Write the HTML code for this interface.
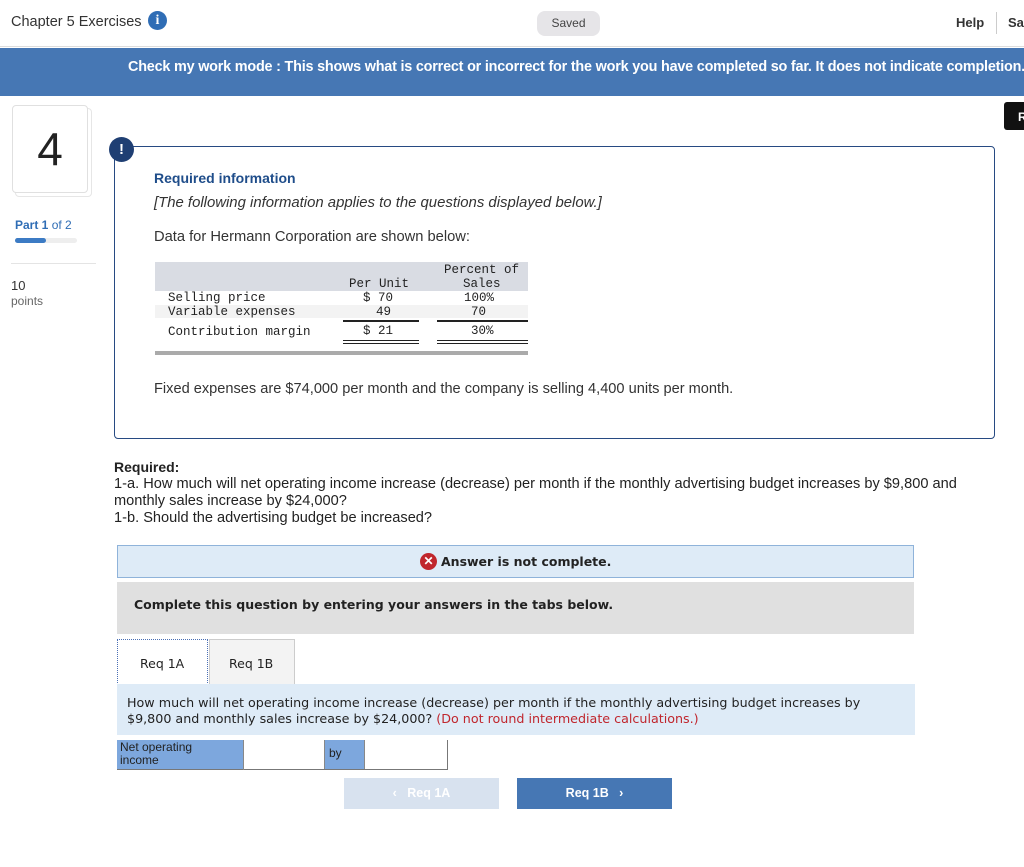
<!DOCTYPE html>
<html><head><meta charset="utf-8"><style>
*{margin:0;padding:0;box-sizing:border-box}
body{width:1024px;height:867px;position:relative;background:#fff;font-family:"Liberation Sans",Arial,sans-serif;color:#222;overflow:hidden}
.a{position:absolute;white-space:nowrap}
.mono{font-family:"Liberation Mono","Courier New",monospace;font-size:12.5px;color:#222}
.v{font-family:"DejaVu Sans","Liberation Sans",sans-serif}
</style></head><body>
<div class="a" style="left:0;top:0;width:1024px;height:47px;border-bottom:1px solid #ddd"></div>
<div class="a" style="left:11px;top:14px;font-size:14.5px;color:#333">Chapter 5 Exercises</div>
<div class="a" style="left:148px;top:11px;width:19px;height:19px;border-radius:50%;background:#2f6db5;color:#fff;font:bold 14px 'Liberation Serif',serif;text-align:center;line-height:19px">i</div>
<div class="a" style="left:537px;top:11px;width:63px;height:25px;border-radius:8px;background:#e6e5e8;font-size:12px;color:#444;text-align:center;line-height:25px">Saved</div>
<div class="a" style="left:956px;top:15px;font-size:13px;font-weight:bold;color:#333">Help</div>
<div class="a" style="left:996px;top:12px;width:1px;height:22px;background:#ccc"></div>
<div class="a" style="left:1008px;top:15px;font-size:13px;font-weight:bold;color:#333">Sa</div>
<div class="a" style="left:0;top:48px;width:1024px;height:48px;background:#4677b4"></div>
<div class="a" style="left:128px;top:59px;font-size:14.4px;font-weight:bold;color:#fff;letter-spacing:-0.2px">Check my work mode : This shows what is correct or incorrect for the work you have completed so far. It does not indicate completion.</div>
<div class="a" style="left:1004px;top:102px;width:30px;height:28px;background:#111;border-radius:3px;color:#fff;font-weight:bold;font-size:12px;padding:8px 0 0 14px">R</div>
<div class="a" style="left:15px;top:108px;width:77px;height:89px;border:1px solid #e6e6e6;border-radius:4px"></div>
<div class="a" style="left:12px;top:105px;width:76px;height:88px;border:1px solid #e0e0e0;border-radius:4px;background:#fff;text-align:center;font-size:46px;line-height:86px;color:#222">4</div>
<div class="a" style="left:15px;top:218px;font-size:12px;color:#2f6db5"><b>Part 1</b> of 2</div>
<div class="a" style="left:15px;top:238px;width:62px;height:5px;border-radius:3px;background:#eee"></div>
<div class="a" style="left:15px;top:238px;width:31px;height:5px;border-radius:3px;background:#3c7bc4"></div>
<div class="a" style="left:11px;top:263px;width:85px;height:1px;background:#e4e4e4"></div>
<div class="a" style="left:11px;top:278px;font-size:13px;color:#333">10</div>
<div class="a" style="left:11px;top:294px;font-size:12px;color:#666">points</div>
<div class="a" style="left:114px;top:146px;width:881px;height:293px;border:1.5px solid #274a82;border-radius:4px"></div>
<div class="a" style="left:109px;top:137px;width:25px;height:25px;border-radius:50%;background:#1f3f73;color:#fff;font-weight:bold;font-size:15px;text-align:center;line-height:25px">!</div>
<div class="a" style="left:154px;top:170px;font-size:14px;font-weight:bold;color:#1f4d8a">Required information</div>
<div class="a" style="left:154px;top:195px;font-size:14.9px;font-style:italic;color:#333">[The following information applies to the questions displayed below.]</div>
<div class="a" style="left:154px;top:229px;font-size:14.7px;color:#333">Data for Hermann Corporation are shown below:</div>
<div class="a" style="left:155px;top:262px;width:373px;height:29px;background:#d9dce3"></div>
<div class="a" style="left:155px;top:305px;width:373px;height:13px;background:#f3f3f3"></div>
<div class="a mono" style="left:444px;top:263px">Percent of</div>
<div class="a mono" style="left:463px;top:277px">Sales</div>
<div class="a mono" style="left:349px;top:277px">Per Unit</div>
<div class="a mono" style="left:168px;top:291px">Selling price</div>
<div class="a mono" style="left:363px;top:291px">$ 70</div>
<div class="a mono" style="left:464px;top:291px">100%</div>
<div class="a mono" style="left:168px;top:305px">Variable expenses</div>
<div class="a mono" style="left:376px;top:305px">49</div>
<div class="a mono" style="left:471px;top:305px">70</div>
<div class="a" style="left:343px;top:320px;width:76px;height:1.5px;background:#222"></div>
<div class="a" style="left:437px;top:320px;width:91px;height:1.5px;background:#222"></div>
<div class="a mono" style="left:168px;top:325px">Contribution margin</div>
<div class="a mono" style="left:363px;top:324px">$ 21</div>
<div class="a mono" style="left:471px;top:324px">30%</div>
<div class="a" style="left:343px;top:340px;width:76px;height:4px;border-top:1.5px solid #222;border-bottom:1.5px solid #222"></div>
<div class="a" style="left:437px;top:340px;width:91px;height:4px;border-top:1.5px solid #222;border-bottom:1.5px solid #222"></div>
<div class="a" style="left:155px;top:351px;width:373px;height:4px;background:#aaa"></div>
<div class="a" style="left:154px;top:381px;font-size:14.6px;color:#333">Fixed expenses are $74,000 per month and the company is selling 4,400 units per month.</div>
<div class="a" style="left:114px;top:459px;font-size:14px;font-weight:bold;color:#222">Required:</div>
<div class="a" style="left:114px;top:476px;font-size:14.6px;color:#222;line-height:17px">1-a. How much will net operating income increase (decrease) per month if the monthly advertising budget increases by $9,800 and<br>monthly sales increase by $24,000?<br>1-b. Should the advertising budget be increased?</div>
<div class="a" style="left:117px;top:545px;width:797px;height:33px;background:#deebf7;border:1px solid #8fb3da"></div>
<div class="a" style="left:420px;top:553px;width:17px;height:17px;border-radius:50%;background:#c0262d;color:#fff;font-size:12px;font-weight:bold;text-align:center;line-height:17px">✕</div>
<div class="a v" style="left:441px;top:554px;font-size:12.5px;font-weight:bold">Answer is not complete.</div>
<div class="a" style="left:117px;top:582px;width:797px;height:52px;background:#e0e0e0"></div>
<div class="a v" style="left:134px;top:597px;font-size:12.5px;font-weight:bold">Complete this question by entering your answers in the tabs below.</div>
<div class="a" style="left:117px;top:639px;width:91px;height:46px;border:1.5px dotted #4a6fb5;background:#fff"></div>
<div class="a v" style="left:140px;top:656px;font-size:12.5px">Req 1A</div>
<div class="a" style="left:209px;top:639px;width:86px;height:46px;background:#f3f3f3;border:1px solid #ccc;border-bottom:none"></div>
<div class="a v" style="left:229px;top:656px;font-size:12.5px">Req 1B</div>
<div class="a" style="left:117px;top:684px;width:798px;height:51px;background:#deebf7"></div>
<div class="a v" style="left:127px;top:695px;font-size:12.7px;line-height:16px">How much will net operating income increase (decrease) per month if the monthly advertising budget increases by<br>$9,800 and monthly sales increase by $24,000? <span style="color:#c0262d">(Do not round intermediate calculations.)</span></div>
<div class="a" style="left:117px;top:740px;width:331px;height:30px;border-right:1px solid #777;border-bottom:1.5px solid #777"></div>
<div class="a" style="left:117px;top:740px;width:126px;height:29px;background:#7da7dd"></div>
<div class="a" style="left:120px;top:741px;width:90px;font-size:12px;line-height:13px;color:#222;white-space:normal">Net operating income</div>
<div class="a" style="left:243px;top:740px;width:1px;height:30px;background:#888"></div>
<div class="a" style="left:324px;top:740px;width:41px;height:29px;background:#7da7dd;border-left:1px solid #888;border-right:1px solid #888;font-size:12px;padding:6px 4px">by</div>
<div class="a" style="left:447px;top:740px;width:1px;height:30px;background:#777"></div>
<div class="a" style="left:344px;top:778px;width:155px;height:31px;background:#d8e2ef;color:#fff;font-size:12.5px;font-weight:bold;text-align:center;line-height:31px">&lsaquo;&nbsp;&nbsp;&nbsp;Req 1A</div>
<div class="a" style="left:517px;top:778px;width:155px;height:31px;background:#4677b4;color:#fff;font-size:12.5px;font-weight:bold;text-align:center;line-height:31px">Req 1B&nbsp;&nbsp;&nbsp;&rsaquo;</div>
</body></html>
